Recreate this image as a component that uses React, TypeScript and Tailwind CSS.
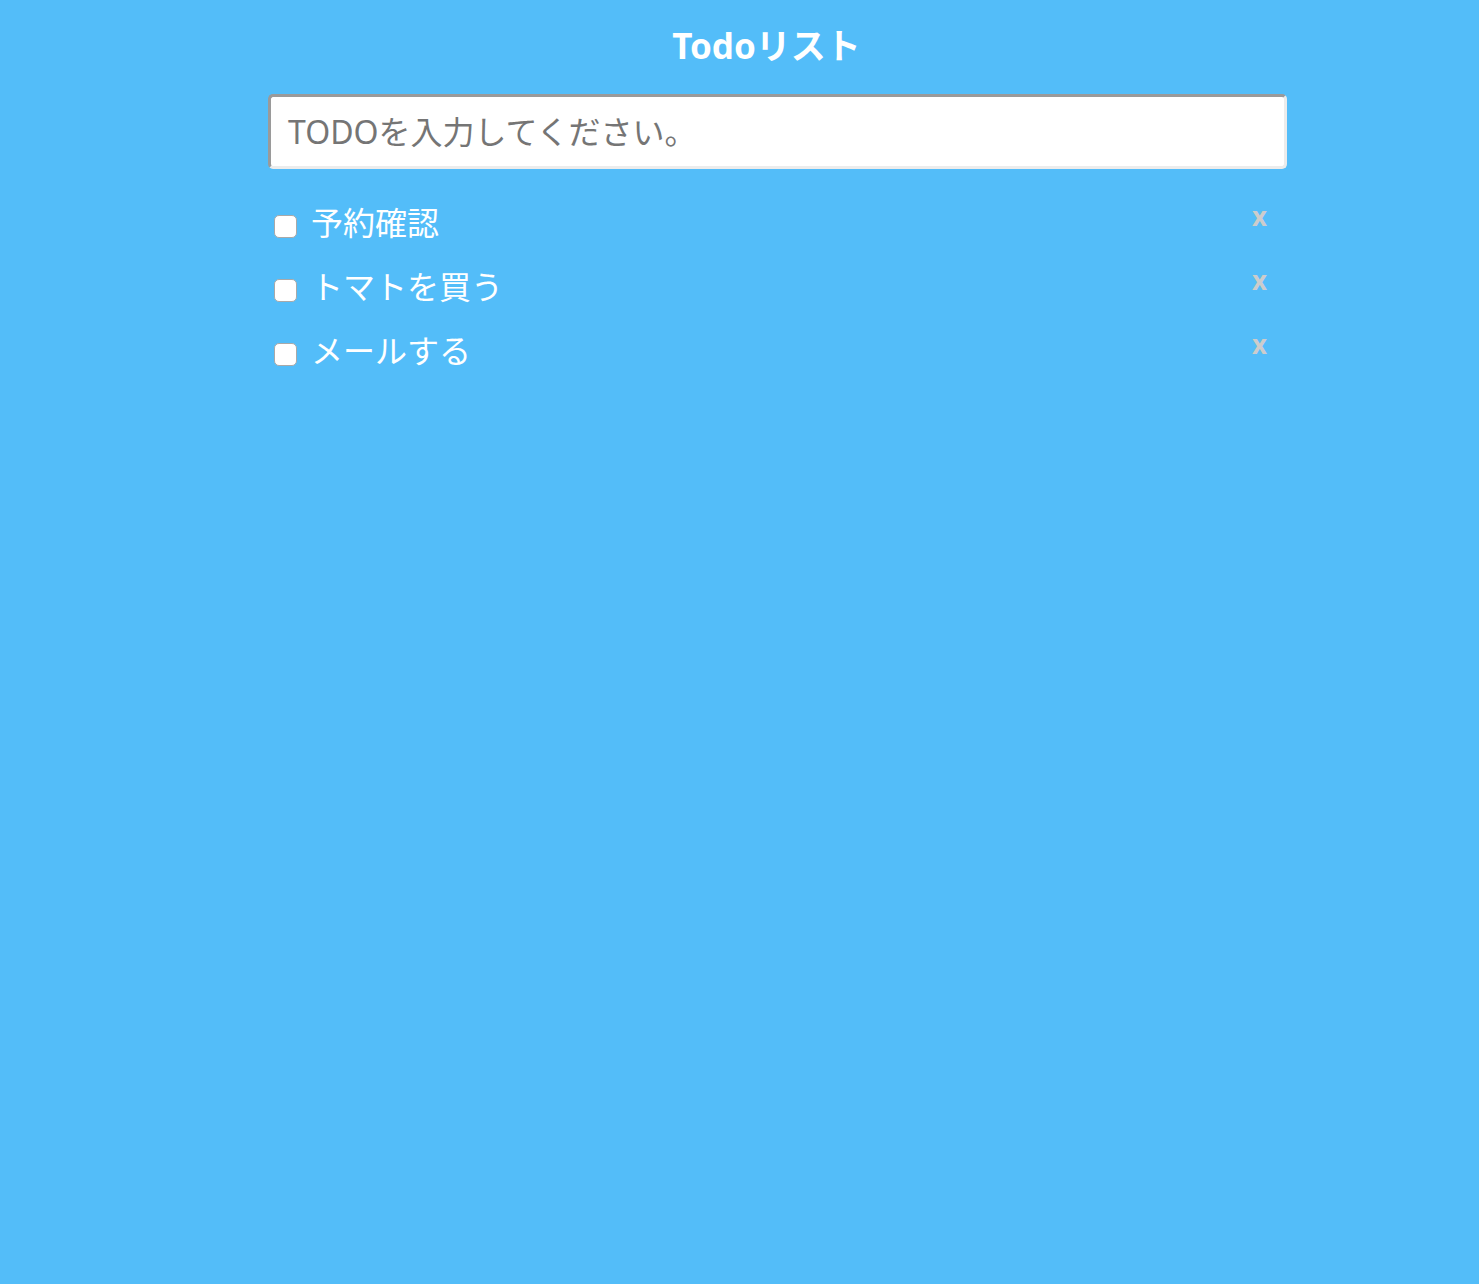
const todos = ["予約確認", "トマトを買う", "メールする"];

function TodoItem({ label }: { label: string }) {
  return (
    <li className="flex h-[64px] items-start">
      <span className="mt-[17px] ml-[6px] h-[23px] w-[23px] shrink-0 rounded-[5px] border border-[#a9a9a9] bg-white" />
      <span className="ml-[14px] mt-[3px] text-[32px] leading-[44px] text-white">{label}</span>
      <span className="ml-auto mr-[20px] mt-[3px] text-[26px] leading-[30px] font-bold text-[#cccccc]">x</span>
    </li>
  );
}

export default function App() {
  return (
    <div className="min-h-[1284px] w-full bg-[#53bdf9] font-['Noto_Sans','Noto_Sans_CJK_JP',sans-serif]">
      <div className="ml-[268px] w-[1019px]">
        <h1 className="pt-[22px] pr-[22px] text-center text-[35px] font-bold leading-[48px] text-white">Todoリスト</h1>
        <div className="mt-[24px] h-[75px] rounded-[5px] border-[3px] border-t-[#9a9a9a] border-l-[#9a9a9a] border-r-[#ececec] border-b-[#ececec] bg-white pl-[17px] flex items-center">
          <span className="text-[32px] text-[#757575]">TODOを入力してください。</span>
        </div>
        <ul className="mt-[29px]">
          {todos.map((t) => (
            <TodoItem key={t} label={t} />
          ))}
        </ul>
      </div>
    </div>
  );
}
